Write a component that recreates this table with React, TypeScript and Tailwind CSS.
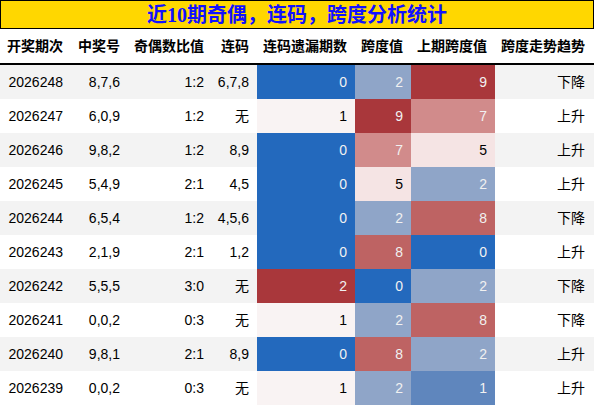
import React from "react";

type Row = {
  id: string;
  nums: string;
  ratio: string;
  lian: string;
  miss: number;
  span: number;
  prev: number;
  trend: string;
};

const rows: Row[] = [
  { id: "2026248", nums: "8,7,6", ratio: "1:2", lian: "6,7,8", miss: 0, span: 2, prev: 9, trend: "下降" },
  { id: "2026247", nums: "6,0,9", ratio: "1:2", lian: "无", miss: 1, span: 9, prev: 7, trend: "上升" },
  { id: "2026246", nums: "9,8,2", ratio: "1:2", lian: "8,9", miss: 0, span: 7, prev: 5, trend: "上升" },
  { id: "2026245", nums: "5,4,9", ratio: "2:1", lian: "4,5", miss: 0, span: 5, prev: 2, trend: "上升" },
  { id: "2026244", nums: "6,5,4", ratio: "1:2", lian: "4,5,6", miss: 0, span: 2, prev: 8, trend: "下降" },
  { id: "2026243", nums: "2,1,9", ratio: "2:1", lian: "1,2", miss: 0, span: 8, prev: 0, trend: "上升" },
  { id: "2026242", nums: "5,5,5", ratio: "3:0", lian: "无", miss: 2, span: 0, prev: 2, trend: "下降" },
  { id: "2026241", nums: "0,0,2", ratio: "0:3", lian: "无", miss: 1, span: 2, prev: 8, trend: "下降" },
  { id: "2026240", nums: "9,8,1", ratio: "2:1", lian: "8,9", miss: 0, span: 8, prev: 2, trend: "上升" },
  { id: "2026239", nums: "0,0,2", ratio: "0:3", lian: "无", miss: 1, span: 2, prev: 1, trend: "上升" },
];

const missColor: Record<number, string> = {
  0: "bg-[#2369bd] text-[#f1f1f1]",
  1: "bg-[#f9f3f3] text-black",
  2: "bg-[#a9373b] text-[#f1f1f1]",
};

const spanColor: Record<number, string> = {
  0: "bg-[#2369bd] text-[#f1f1f1]",
  1: "bg-[#5f86bd] text-[#f1f1f1]",
  2: "bg-[#8fa5c8] text-[#f1f1f1]",
  5: "bg-[#f5e4e4] text-black",
  7: "bg-[#d18b8b] text-[#f1f1f1]",
  8: "bg-[#be6363] text-[#f1f1f1]",
  9: "bg-[#a9373b] text-[#f1f1f1]",
};

const grid =
  "grid grid-cols-[71px_57px_84px_45px_98px_56px_84px_99px]";

const headers = ["开奖期次", "中奖号", "奇偶数比值", "连码", "连码遗漏期数", "跨度值", "上期跨度值", "跨度走势趋势"];

export default function App() {
  return (
    <div
      className="w-[594px] h-[406px] bg-white text-black text-[14px] overflow-hidden"
      style={{ fontFamily: '"Liberation Sans", "Noto Sans CJK SC", sans-serif' }}
    >
      <div className="h-[29px] border border-black bg-[#ffd700] flex items-center justify-center">
        <span
          className="text-[20px] font-bold text-[#1111ff] leading-none"
          style={{ fontFamily: '"Liberation Serif", "Noto Sans CJK SC", serif' }}
        >
          近10期奇偶，连码，跨度分析统计
        </span>
      </div>
      <div className={`${grid} h-[36px] border-b-2 border-black font-bold`}>
        {headers.map((h, i) => (
          <div key={h} className={`flex items-center justify-end ${i === 7 ? "pr-[9px]" : "pr-2"}`}>
            {h}
          </div>
        ))}
      </div>
      {rows.map((r, idx) => (
        <div
          key={r.id}
          className={`${grid} h-[34px] ${idx % 2 === 0 ? "bg-[#f3f3f3]" : "bg-white"}`}
        >
          <div className="flex items-center justify-end pr-2">{r.id}</div>
          <div className="flex items-center justify-end pr-2">{r.nums}</div>
          <div className="flex items-center justify-end pr-2">{r.ratio}</div>
          <div className="flex items-center justify-end pr-2">{r.lian}</div>
          <div className={`flex items-center justify-end pr-2 ${missColor[r.miss]}`}>{r.miss}</div>
          <div className={`flex items-center justify-end pr-2 ${spanColor[r.span]}`}>{r.span}</div>
          <div className={`flex items-center justify-end pr-2 ${spanColor[r.prev]}`}>{r.prev}</div>
          <div className="flex items-center justify-end pr-[9px]">{r.trend}</div>
        </div>
      ))}
    </div>
  );
}
